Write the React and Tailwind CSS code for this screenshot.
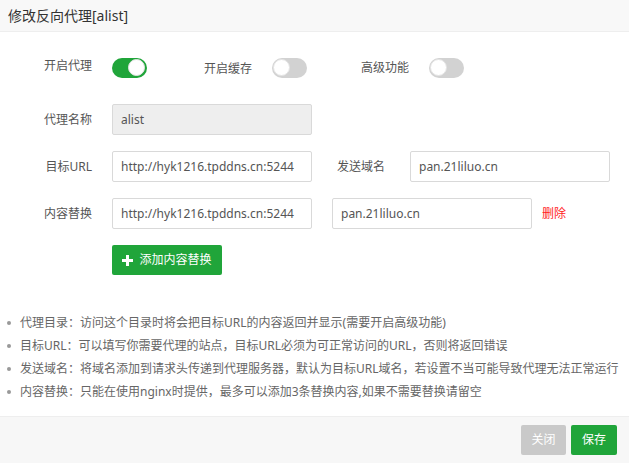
import React from "react";

const Toggle = ({ on }) => (
  <div
    className={
      on
        ? "w-[35px] h-[20px] rounded-full bg-[#20a53a] flex items-center justify-end px-[2px]"
        : "w-[35px] h-[20px] rounded-full bg-[#d2d2d2] flex items-center justify-start px-[1px]"
    }
  >
    <div className="w-[17px] h-[17px] rounded-full bg-white border border-[#e4e4e4]" />
  </div>
);

const Field = ({ value, width = "w-[200px]", disabled }) => (
  <div
    className={
      (disabled ? "bg-[#eeeeee] " : "bg-white ") +
      width +
      " h-[31px] border border-[#d9d9d9] rounded-[2px] px-[8px] flex items-center text-[12px] text-[#555]"
    }
  >
    {value}
  </div>
);

const Label = ({ children }) => (
  <div className="w-[112px] pr-[20px] text-right text-[12px] text-[#555]">{children}</div>
);

const notes = [
  "代理目录：访问这个目录时将会把目标URL的内容返回并显示(需要开启高级功能)",
  "目标URL：可以填写你需要代理的站点，目标URL必须为可正常访问的URL，否则将返回错误",
  "发送域名：将域名添加到请求头传递到代理服务器，默认为目标URL域名，若设置不当可能导致代理无法正常运行",
  "内容替换：只能在使用nginx时提供，最多可以添加3条替换内容,如果不需要替换请留空",
];

export default function App() {
  return (
    <div
      className="w-[629px] h-[463px] bg-white flex flex-col overflow-hidden"
      style={{ fontFamily: '"Noto Sans", "Noto Sans CJK SC", sans-serif' }}
    >
      <div className="h-[32px] bg-[#f8f8f8] border-b border-[#eeeeee] px-[8px] flex items-center text-[14px] text-[#333]">
        修改反向代理[alist]
      </div>

      <div className="flex-1 pt-[20px]">
        <div className="flex items-center h-[31px] mb-[21px]">
          <div className="w-[112px] pr-[20px] text-right text-[12px] text-[#555] mb-[4px]">开启代理</div>
          <Toggle on />
          <div className="w-[57px]" />
          <div className="text-[12px] text-[#555] mr-[20px] mt-[2px]">开启缓存</div>
          <Toggle />
          <div className="w-[54px]" />
          <div className="text-[12px] text-[#555] mr-[20px]">高级功能</div>
          <Toggle />
        </div>

        <div className="flex items-center mb-[16px]">
          <Label>代理名称</Label>
          <Field value="alist" disabled />
        </div>

        <div className="flex items-center mb-[16px]">
          <Label>目标URL</Label>
          <Field value="http://hyk1216.tpddns.cn:5244" />
          <div className="pl-[25px] w-[98px] text-[12px] text-[#555]">发送域名</div>
          <Field value="pan.21liluo.cn" />
        </div>

        <div className="flex items-center mb-[16px]">
          <Label>内容替换</Label>
          <Field value="http://hyk1216.tpddns.cn:5244" />
          <div className="w-[20px]" />
          <Field value="pan.21liluo.cn" />
          <div className="ml-[10px] text-[12px] text-[#f22]">删除</div>
        </div>

        <div className="pl-[112px]">
          <div className="w-[110px] h-[30px] bg-[#20a53a] rounded-[2px] flex items-center justify-center gap-[6px] text-white text-[12px]">
            <svg width="11" height="11" viewBox="0 0 11 11">
              <path d="M4 0h3v4h4v3H7v4H4V7H0V4h4z" fill="white" />
            </svg>
            添加内容替换
          </div>
        </div>

        <ul className="mt-[36px] pl-[20px] text-[12px] text-[#666]">
          {notes.map((n) => (
            <li key={n} className="relative leading-[23px]">
              <span className="absolute left-[-13px] top-[10px] w-[4px] h-[4px] rounded-full bg-[#999]" />
              {n}
            </li>
          ))}
        </ul>
      </div>

      <div className="h-[47px] bg-[#f7f7f7] border-t border-[#eeeeee] flex items-center justify-end gap-[5px] pr-[12px]">
        <div className="w-[45px] h-[30px] rounded-[2px] bg-[#c9c9c9] text-white text-[12px] flex items-center justify-center">
          关闭
        </div>
        <div className="w-[46px] h-[30px] rounded-[2px] bg-[#20a53a] text-white text-[12px] flex items-center justify-center">
          保存
        </div>
      </div>
    </div>
  );
}
